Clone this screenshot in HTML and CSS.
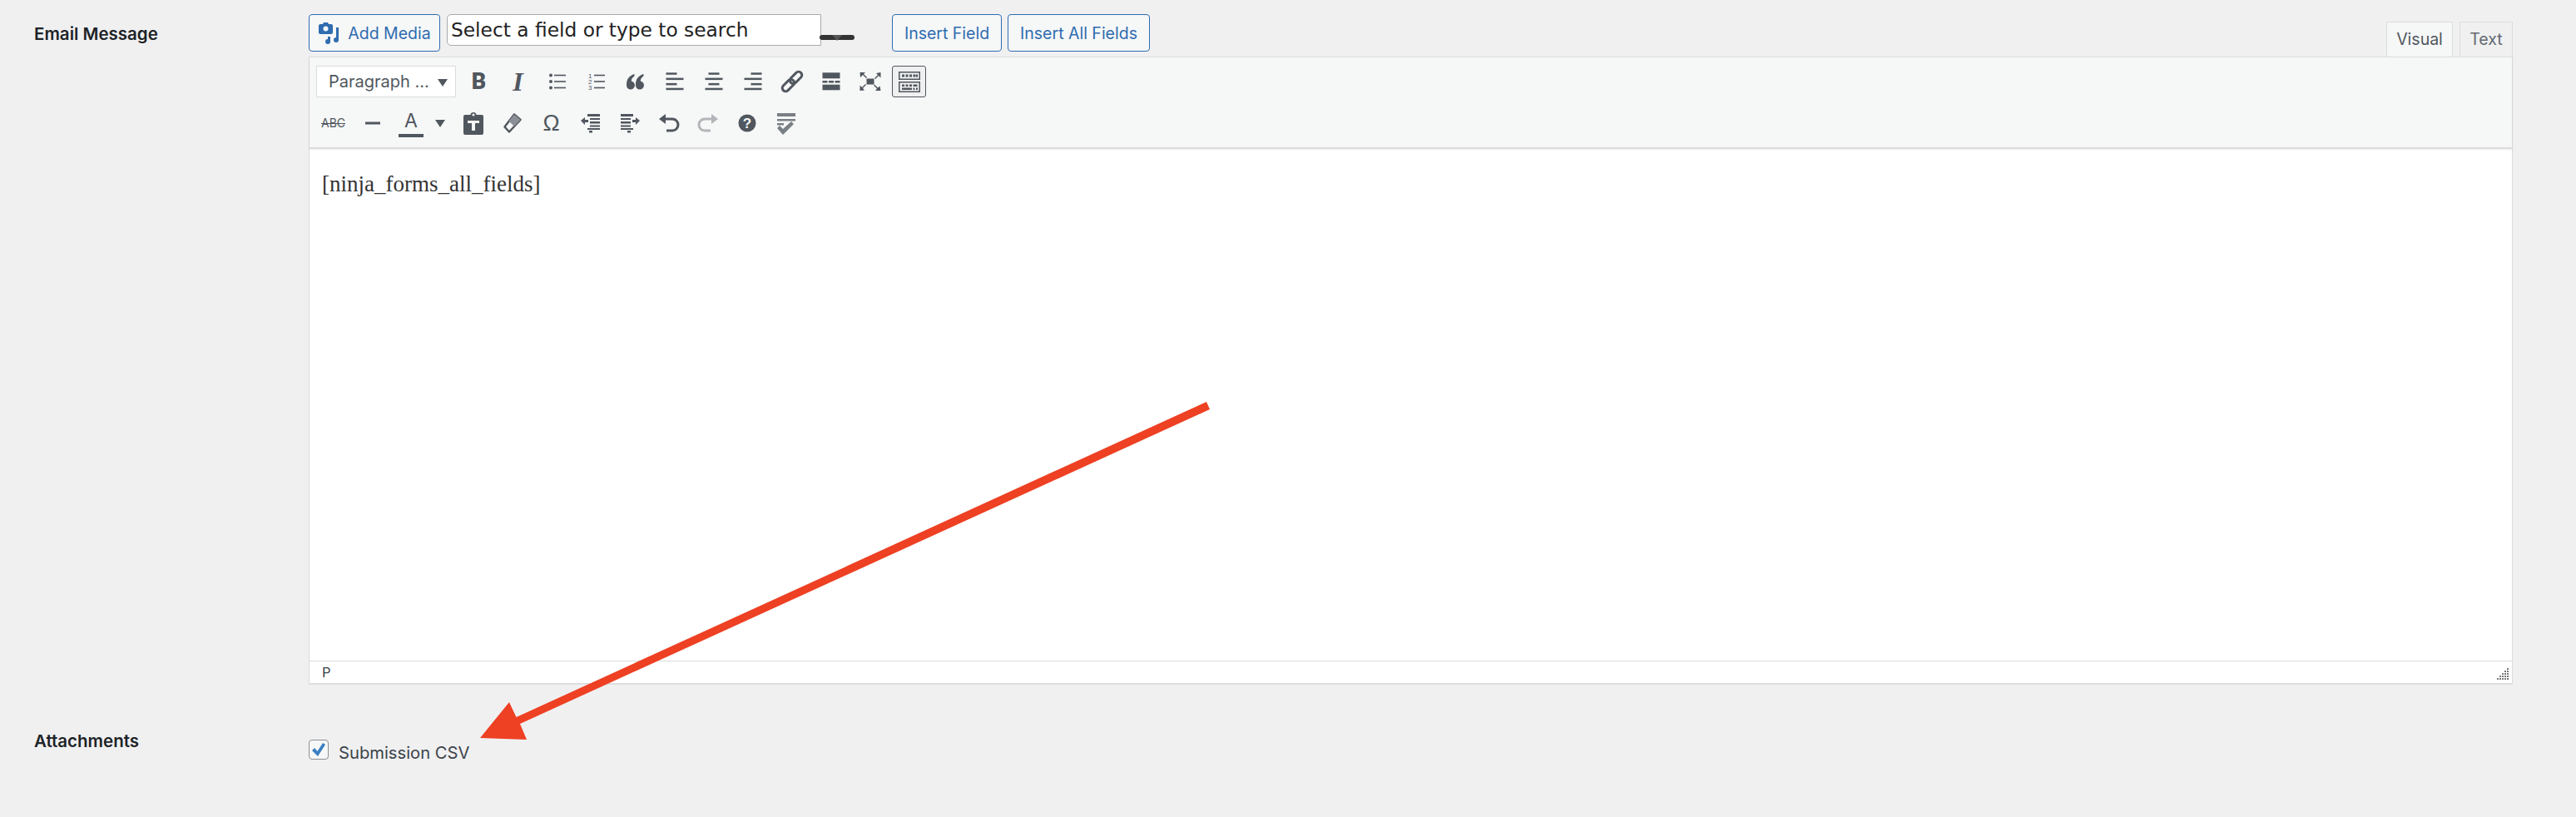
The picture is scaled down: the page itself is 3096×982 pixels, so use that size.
FILE: index.html
```html
<!DOCTYPE html>
<html lang="en">

<head>
    <meta charset="UTF-8">
    <title>Email Message</title>
    <link rel="stylesheet" href="styles.css">
</head>

<body>
    <div class="form-page">
        <div class="field-row">
            <div class="field-label label-message">Email Message</div>
            <div class="field-body">
                <div class="media-row">
                    <button class="wp-btn btn-media">
                        <svg class="media-icon" width="26" height="28" viewBox="0 0 26 28">
                            <path d="M3 3h3l1-2h5l1 2h3a2 2 0 0 1 2 2v8a2 2 0 0 1-2 2H3a2 2 0 0 1-2-2V5a2 2 0 0 1 2-2z" fill="#2f6cb0" />
                            <circle cx="9.5" cy="8.5" r="3" fill="#f6f7f7" />
                            <path d="M22 7h3v15a3 3 0 1 1-3-3z" fill="#2f6cb0" />
                            <path d="M12 18h3v6a3 3 0 1 1-3-3z" fill="#2f6cb0" />
                        </svg>
                        Add Media
                    </button>
                    <div class="field-select">Select a field or type to search</div>
                    <div class="select-arrow"><span></span></div>
                    <button class="wp-btn btn-insert">Insert Field</button>
                    <button class="wp-btn btn-insert-all">Insert All Fields</button>
                    <div class="editor-tabs">
                        <div class="editor-tab tab-active">Visual</div>
                        <div class="editor-tab tab-text">Text</div>
                    </div>
                </div>

                <div class="editor">
                    <div class="toolbar">
                        <div class="tool-row">
                            <div class="format-select">Paragraph ...<i class="caret"></i></div>
                            <div class="tool tool-bold">B</div>
                            <div class="tool tool-italic">I</div>
                            <div class="tool">
                                <svg width="28" height="28" viewBox="0 0 28 28" class="ico">
                                    <circle cx="6" cy="6.5" r="2" /><circle cx="6" cy="14" r="2" /><circle cx="6" cy="21.5" r="2" />
                                    <rect x="10" y="5.7" width="14" height="1.6" /><rect x="10" y="13.2" width="14" height="1.6" /><rect x="10" y="20.7" width="14" height="1.6" />
                                </svg>
                            </div>
                            <div class="tool">
                                <svg width="28" height="28" viewBox="0 0 28 28" class="ico">
                                    <text x="4" y="9.5" class="ico-num">1</text><text x="4" y="16.5" class="ico-num">2</text><text x="4" y="24" class="ico-num">3</text>
                                    <rect x="11" y="5.7" width="13" height="1.6" /><rect x="11" y="13.2" width="13" height="1.6" /><rect x="11" y="20.7" width="13" height="1.6" />
                                </svg>
                            </div>
                            <div class="tool">
                                <svg width="28" height="28" viewBox="0 0 28 28" class="ico">
                                    <path d="M3 18C3 11 6 7 12.500 5L12.500 7.500C10 9 8.800 11 8.800 13.600A5 5 0 1 1 3 18Z" />
                                    <path d="M14 18C14 11 17 7 23.500 5L23.500 7.500C21 9 19.800 11 19.800 13.600A5 5 0 1 1 14 18Z" />
                                </svg>
                            </div>
                            <div class="tool">
                                <svg width="28" height="28" viewBox="0 0 28 28" class="ico">
                                    <rect x="3.500" y="3.300" width="13" height="2.500" /><rect x="3.500" y="9.600" width="21" height="2.500" /><rect x="3.500" y="15.900" width="13" height="2.500" /><rect x="3.500" y="21.700" width="21" height="2.500" />
                                </svg>
                            </div>
                            <div class="tool">
                                <svg width="28" height="28" viewBox="0 0 28 28" class="ico">
                                    <rect x="7.500" y="3.300" width="13" height="2.500" /><rect x="3.500" y="9.600" width="21" height="2.500" /><rect x="7.500" y="15.900" width="13" height="2.500" /><rect x="3.500" y="21.700" width="21" height="2.500" />
                                </svg>
                            </div>
                            <div class="tool">
                                <svg width="28" height="28" viewBox="0 0 28 28" class="ico">
                                    <rect x="11.500" y="3.300" width="13" height="2.500" /><rect x="3.500" y="9.600" width="21" height="2.500" /><rect x="11.500" y="15.900" width="13" height="2.500" /><rect x="3.500" y="21.700" width="21" height="2.500" />
                                </svg>
                            </div>
                            <div class="tool">
                                <svg width="28" height="28" viewBox="0 0 28 28" class="ico-line">
                                    <g transform="rotate(-45 14 14)">
                                        <rect x="-1" y="10" width="17" height="8" rx="4" />
                                        <rect x="12" y="10" width="17" height="8" rx="4" />
                                    </g>
                                </svg>
                            </div>
                            <div class="tool">
                                <svg width="28" height="28" viewBox="0 0 28 28" class="ico">
                                    <rect x="3.500" y="3.300" width="21" height="7" /><rect x="3.500" y="13" width="6" height="2.500" /><rect x="11" y="13" width="6" height="2.500" /><rect x="18.500" y="13" width="6" height="2.500" /><rect x="3.500" y="17.700" width="21" height="6.600" />
                                </svg>
                            </div>
                            <div class="tool">
                                <svg width="28" height="28" viewBox="0 0 28 28" class="ico">
                                    <rect x="9.500" y="10.500" width="9" height="7" />
                                    <path d="M1.500 3h6.500l-2 2 4 4-1 1-4-4-3 3zM26.500 3v6.500l-2.500-2.500-4 4-1-1 4-4-2-2zM1.500 25v-6.500l2.500 2.500 4-4 1 1-4 4 2 2.500zM26.500 25h-6.500l2-2.500-4-4 1-1 4 4 2.500-2z" />
                                </svg>
                            </div>
                            <div class="tool tool-on">
                                <svg width="28" height="26" viewBox="0 0 28 26" class="ico">
                                    <path fill-rule="evenodd" d="M1 1h26v10H1zM2.500 2.500v7h23v-7zM1 13h26v13H1zM2.500 14.500v10h23v-10z" />
                                    <rect x="5" y="4.500" width="3" height="3" /><rect x="9.500" y="4.500" width="3" height="3" /><rect x="14" y="4.500" width="3" height="3" /><rect x="18.500" y="4.500" width="3" height="3" /><rect x="22" y="4.500" width="2" height="3" />
                                    <rect x="5" y="16.500" width="3" height="2.500" /><rect x="9.500" y="16.500" width="3" height="2.500" /><rect x="14" y="16.500" width="3" height="2.500" /><rect x="18.500" y="16.500" width="5" height="2.500" />
                                    <rect x="5" y="20.500" width="12" height="2.500" /><rect x="18.500" y="20.500" width="2" height="2.500" /><rect x="22" y="20.500" width="2" height="2.500" />
                                </svg>
                            </div>
                        </div>
                        <div class="tool-row row-second">
                            <div class="tool tool-strike">ABC</div>
                            <div class="tool">
                                <svg width="28" height="28" viewBox="0 0 28 28" class="ico"><rect x="5" y="12.500" width="18" height="3" /></svg>
                            </div>
                            <div class="tool-color">
                                <div class="color-letter">A</div>
                                <i class="caret"></i>
                            </div>
                            <div class="tool">
                                <svg width="28" height="28" viewBox="0 0 28 28" class="ico">
                                    <path d="M4 4h6.500c0-4 7-4 7 0H24a2 2 0 0 1 2 2v20a2 2 0 0 1-2 2H4a2 2 0 0 1-2-2V6a2 2 0 0 1 2-2z" />
                                    <circle cx="14" cy="4" r="1.500" fill="#f6f7f7" />
                                    <rect x="7" y="11" width="14" height="3" fill="#f6f7f7" /><rect x="12" y="14" width="4" height="9" fill="#f6f7f7" />
                                </svg>
                            </div>
                            <div class="tool">
                                <svg width="28" height="28" viewBox="0 0 28 28" class="ico-eraser">
                                    <path class="eraser-body" d="M16 3.500l7.500 6.500L10 24.500l-5.500-6z" />
                                    <path class="eraser-top" d="M16 3.500l7.500 6.500-7.500 8-6.500-6.500z" />
                                </svg>
                            </div>
                            <div class="tool tool-omega">Ω</div>
                            <div class="tool">
                                <svg width="28" height="28" viewBox="0 0 28 28" class="ico">
                                    <rect x="10" y="3" width="15" height="3" /><rect x="13" y="8" width="12" height="2" /><rect x="13" y="12" width="12" height="2.500" /><rect x="13" y="16.500" width="12" height="2" /><rect x="10" y="20" width="15" height="2" /><rect x="12" y="23" width="4" height="2.500" />
                                    <path d="M2 11l5-4v3h4v3H7v3z" />
                                </svg>
                            </div>
                            <div class="tool">
                                <svg width="28" height="28" viewBox="0 0 28 28" class="ico">
                                    <rect x="3" y="3" width="15" height="3" /><rect x="3" y="8" width="12" height="2" /><rect x="3" y="12" width="12" height="2.500" /><rect x="3" y="16.500" width="12" height="2" /><rect x="3" y="20" width="15" height="2" /><rect x="11" y="23" width="4" height="2.500" />
                                    <path d="M26 11l-5-4v3h-4v3h4v3z" />
                                </svg>
                            </div>
                            <div class="tool">
                                <svg width="28" height="28" viewBox="0 0 28 28" class="ico-stroke">
                                    <path d="M7 9h11a6.500 6.500 0 0 1 0 14h-7" />
                                    <path class="ico-head" d="M2 9l8-6v12z" />
                                </svg>
                            </div>
                            <div class="tool tool-off">
                                <svg width="28" height="28" viewBox="0 0 28 28" class="ico-stroke">
                                    <path d="M21 9H10a6.500 6.500 0 0 0 0 14h7" />
                                    <path class="ico-head" d="M26 9l-8-6v12z" />
                                </svg>
                            </div>
                            <div class="tool">
                                <svg width="28" height="28" viewBox="0 0 28 28" class="ico">
                                    <circle cx="14" cy="14" r="10.500" />
                                    <text x="14" y="20" class="ico-help">?</text>
                                </svg>
                            </div>
                            <div class="tool tool-check">
                                <svg width="28" height="28" viewBox="0 0 28 28" class="ico">
                                    <rect x="3" y="2" width="22" height="4" /><rect x="3" y="9" width="22" height="2.500" /><rect x="3" y="14" width="8" height="2.500" />
                                    <path d="M3 20l3-3 4 4 10-9 3 3-13 13z" />
                                </svg>
                            </div>
                        </div>
                    </div>
                    <div class="editor-content">[ninja_forms_all_fields]</div>
                    <div class="status-bar">
                        <span>p</span>
                        <svg class="resize-handle" width="15" height="15" viewBox="0 0 15 15" fill="#777">
                            <path d="M13 0h2v2h-2zM10 3h2v2h-2zM13 3h2v2h-2zM7 6h2v2H7zM10 6h2v2h-2zM13 6h2v2h-2zM4 9h2v2H4zM7 9h2v2H7zM10 9h2v2h-2zM13 9h2v2h-2zM1 12h2v2H1zM4 12h2v2H4zM7 12h2v2H7zM10 12h2v2h-2zM13 12h2v2h-2z" />
                        </svg>
                    </div>
                </div>
            </div>
        </div>

        <div class="field-row row-attach">
            <div class="field-label label-attach">Attachments</div>
            <label class="check-field">
                <span class="check-box">
                    <svg width="18" height="18" viewBox="0 0 18 18"><path d="M1 10l3-3 3.500 4L14 1l3 2-9 14z" fill="#3a7fc2" /></svg>
                </span>
                Submission CSV
            </label>
        </div>
    </div>

    <!-- annotation drawn on top of the screenshot -->
    <svg class="annotation" width="3096" height="982" viewBox="0 0 3096 982">
        <polygon points="1450,483 1454,492 625,870 633,889 577,887 612,844 620.500,862" fill="#ee4023" />
    </svg>
</body>

</html>
```

FILE: styles.css
```css
body {
    margin: 0;
    background-color: #f0f0f1;
    font-family: 'Inter', 'Liberation Sans', sans-serif;
    color: #3c434a;
}

.form-page {
    height: 982px;
    box-sizing: border-box;
    padding: 17px 76px 0 0;
    overflow: hidden;
}

.field-row {
    display: flex;
}

.field-label {
    width: 330px;
    margin-left: 41px;
    font-size: 20.5px;
    font-weight: 600;
    color: #1d2327;
}

.label-message {
    margin-top: 11px;
}

.label-attach {
    margin-top: 56px;
}

.field-body {
    flex: 1;
}

.media-row {
    display: flex;
    align-items: flex-start;
    height: 51px;
}

.wp-btn {
    height: 45px;
    box-sizing: border-box;
    border: 1px solid #2f6cb0;
    border-radius: 4px;
    background-color: #f6f7f7;
    color: #2f6cb0;
    font-family: inherit;
    font-size: 19.500px;
    padding: 0;
    display: flex;
    align-items: center;
    justify-content: center;
}

.btn-media {
    width: 158px;
}

.media-icon {
    margin-right: 10px;
}

.btn-insert {
    width: 132px;
    margin-left: 45px;
}

.btn-insert-all {
    width: 171px;
    margin-left: 7px;
}

.field-select {
    width: 450px;
    height: 38px;
    box-sizing: border-box;
    margin-left: 8px;
    padding-left: 4px;
    border: 1px solid #aaa;
    border-radius: 5px 0 0 5px;
    background-color: white;
    color: #222;
    font-family: 'DejaVu Sans', sans-serif;
    font-size: 23.300px;
    line-height: 36px;
}

.select-arrow {
    width: 42px;
    height: 6px;
    margin: 25px 0 0 -2px;
    border-radius: 3px;
    background-color: #333;
    text-align: center;
    line-height: 0;
}

.select-arrow span {
    display: inline-block;
    border-left: 6px solid transparent;
    border-right: 6px solid transparent;
    border-top: 7px solid #555;
}

.editor-tabs {
    margin-left: auto;
    margin-top: 9px;
    display: flex;
    gap: 8px;
}

.editor-tab {
    width: 80px;
    height: 42px;
    box-sizing: border-box;
    border: 1px solid #dcdcde;
    border-bottom: none;
    font-size: 19.500px;
    line-height: 40px;
    text-align: center;
    color: #646970;
}

.tab-active {
    background-color: #f6f7f7;
    color: #50575e;
}

.tab-text {
    width: 64px;
}

.editor {
    border: 1px solid #dcdcde;
    background-color: white;
    box-shadow: 0 1px 1px rgba(0, 0, 0, 0.06);
}

.toolbar {
    height: 110px;
    padding-top: 10px;
    padding-left: 8px;
    box-sizing: border-box;
    background-color: #f6f7f7;
    border-bottom: 2px solid #dcdcde;
    box-shadow: 0 1px 2px rgba(0, 0, 0, 0.08);
}

.tool-row {
    display: flex;
    align-items: center;
    height: 38px;
    gap: 6px;
}

.row-second {
    margin-top: 12px;
}

.format-select {
    width: 168px;
    height: 38px;
    box-sizing: border-box;
    margin-right: 1px;
    padding-left: 14px;
    border: 1px solid #dcdcde;
    background-color: white;
    color: #50575e;
    font-size: 20px;
    line-height: 36px;
    position: relative;
}

.caret {
    display: inline-block;
    border-left: 6px solid transparent;
    border-right: 6px solid transparent;
    border-top: 9px solid #50575e;
}

.format-select .caret {
    position: absolute;
    right: 9px;
    top: 15px;
}

.tool {
    width: 41px;
    height: 38px;
    box-sizing: border-box;
    display: flex;
    align-items: center;
    justify-content: center;
    color: #50575e;
}

.ico {
    fill: #50575e;
}

.ico-num {
    font-family: 'Liberation Sans', sans-serif;
    font-size: 8px;
}

.ico-help {
    fill: #f6f7f7;
    font-family: 'Liberation Sans', sans-serif;
    font-size: 17px;
    font-weight: 700;
    text-anchor: middle;
}

.ico-line {
    fill: none;
    stroke: #50575e;
    stroke-width: 3;
}

.ico-stroke {
    fill: none;
    stroke: #50575e;
    stroke-width: 3;
}

.ico-head {
    fill: #50575e;
    stroke: none;
}

.ico-eraser {
    stroke: #50575e;
    stroke-width: 2.500;
    stroke-linejoin: round;
}

.eraser-body {
    fill: #f6f7f7;
}

.eraser-top {
    fill: #8b9096;
    stroke: none;
}

.tool-bold {
    font-family: 'Roboto', sans-serif;
    font-size: 27px;
    font-weight: 900;
}

.tool-italic {
    font-family: 'Liberation Serif', serif;
    font-size: 32px;
    font-weight: 700;
    font-style: italic;
}

.tool-on {
    border: 1px solid #50575e;
    border-radius: 3px;
    background-color: #f0f0f1;
}

.tool-strike {
    padding-bottom: 2px;
    font-size: 14px;
    text-decoration: line-through;
}

.tool-omega {
    font-family: 'Liberation Sans', sans-serif;
    font-size: 27px;
}

.tool-off {
    opacity: 0.4;
}

.tool-check {
    opacity: 0.75;
}

.tool-color {
    width: 68px;
    height: 38px;
    display: flex;
    align-items: center;
    padding-left: 5px;
    box-sizing: border-box;
}

.color-letter {
    width: 30px;
    height: 28px;
    margin-top: 2px;
    margin-right: 14px;
    border-bottom: 4px solid #50575e;
    text-align: center;
    font-size: 23px;
    line-height: 24px;
    color: #50575e;
}

.editor-content {
    height: 615px;
    box-sizing: border-box;
    padding: 24px 0 0 15px;
    font-family: 'Liberation Serif', serif;
    font-size: 27px;
    line-height: 36px;
    color: #333;
}

.status-bar {
    height: 27px;
    box-sizing: border-box;
    padding: 0 4px 0 15px;
    border-top: 1px solid #dcdcde;
    display: flex;
    justify-content: space-between;
    font-size: 16.500px;
    line-height: 26px;
    color: #3c434a;
    text-transform: uppercase;
}

.resize-handle {
    margin-top: 8px;
}

.row-attach {
    align-items: flex-start;
}

.check-field {
    display: flex;
    align-items: center;
    margin-top: 67px;
    font-size: 20.200px;
    color: #3c434a;
}

.check-box {
    width: 24px;
    height: 24px;
    box-sizing: border-box;
    margin-right: 12px;
    margin-bottom: 6px;
    border: 1px solid #8c8f94;
    border-radius: 4px;
    background-color: #f6f7f7;
    display: flex;
    align-items: center;
    justify-content: center;
}

.annotation {
    position: absolute;
    top: 0;
    left: 0;
    pointer-events: none;
}
```
